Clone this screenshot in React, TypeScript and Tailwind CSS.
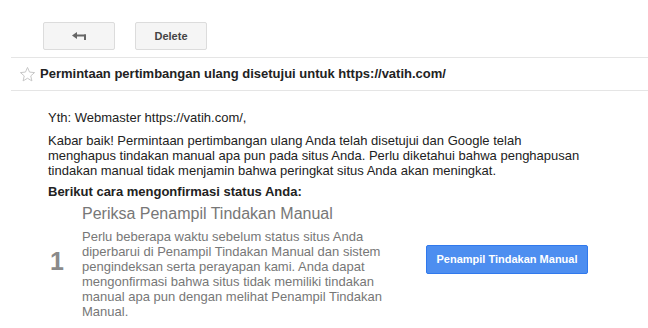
export default function App() {
  return (
    <div className="w-[648px] h-[328px] overflow-hidden bg-white font-['Liberation_Sans',Arial,sans-serif] text-[#222]">
      {/* Toolbar */}
      <div className="flex gap-5 pl-[43px] pt-[22px]">
        <button className="flex h-[28px] w-[72px] items-center justify-center rounded-[2px] border border-[#dcdcdc] bg-[#f5f5f5]">
          <svg width="15" height="9" viewBox="0 0 15 9" fill="#666">
            <path d="M0 3.5 L5 0 L5 7 Z" />
            <rect x="4" y="2.5" width="10" height="2" />
            <rect x="12" y="2.5" width="2" height="5.5" />
          </svg>
        </button>
        <button className="flex h-[28px] w-[72px] items-center justify-center rounded-[2px] border border-[#dcdcdc] bg-[#f5f5f5] text-[11px] font-bold text-[#444]">
          Delete
        </button>
      </div>

      {/* Subject */}
      <div className="ml-[11px] mt-[7px] flex h-[34px] items-center border-y border-[#e5e5e5] pl-[8px]">
        <svg width="17" height="17" viewBox="0 0 24 24" fill="none" stroke="#c6c6c6" strokeWidth="1.4" strokeLinejoin="miter">
          <path d="M12 2 L14.9 8.6 L22 9.3 L16.6 14 L18.2 21 L12 17.3 L5.8 21 L7.4 14 L2 9.3 L9.1 8.6 Z" />
        </svg>
        <h1 className="ml-[4px] text-[13px] font-bold text-[#222]">
          Permintaan pertimbangan ulang disetujui untuk https://vatih.com/
        </h1>
      </div>

      {/* Body */}
      <div className="pl-[48px] pt-[19px] text-[13px] leading-[15px]">
        <p>Yth: Webmaster https://vatih.com/,</p>
        <p className="mt-[8px] w-[536px]">
          Kabar baik! Permintaan pertimbangan ulang Anda telah disetujui dan Google telah menghapus tindakan manual apa
          pun pada situs Anda. Perlu diketahui bahwa penghapusan tindakan manual tidak menjamin bahwa peringkat situs
          Anda akan meningkat.
        </p>
        <p className="mt-[6px] font-bold">Berikut cara mengonfirmasi status Anda:</p>

        <div className="mt-[5px] flex items-center">
          <div className="w-[34px] pl-[2px] text-[25px] font-bold text-[#8a8a8a]">1</div>
          <div className="w-[310px]">
            <h2 className="text-[16px] leading-[20px] text-[#777]">Periksa Penampil Tindakan Manual</h2>
            <p className="mt-[5px] text-[#777]">
              Perlu beberapa waktu sebelum status situs Anda diperbarui di Penampil Tindakan Manual dan sistem
              pengindeksan serta perayapan kami. Anda dapat mengonfirmasi bahwa situs tidak memiliki tindakan manual apa
              pun dengan melihat Penampil Tindakan Manual.
            </p>
          </div>
          <button className="-mt-[4px] ml-[34px] h-[29px] w-[162px] rounded-[2px] border border-[#3079ed] bg-[#4d8ef0] text-[11px] font-bold text-white">
            Penampil Tindakan Manual
          </button>
        </div>
      </div>
    </div>
  );
}
